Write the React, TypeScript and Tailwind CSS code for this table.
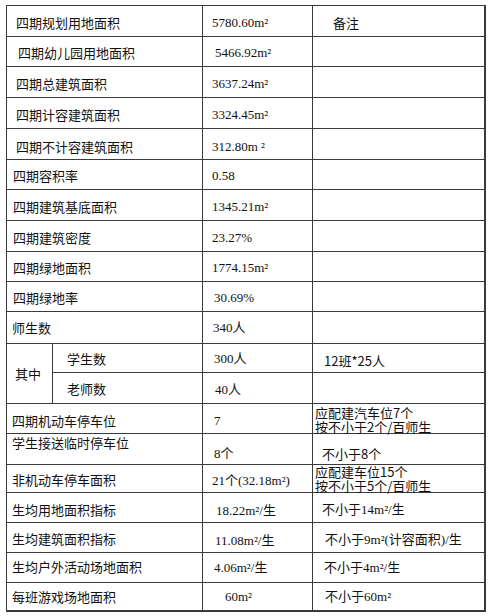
import React from "react";

const sans = "font-['Noto_Sans_CJK_SC',sans-serif]";
const serif = "font-['Liberation_Serif','Noto_Sans_CJK_SC',serif]";
const base = "flex items-center border-r border-b border-[#3a3a3a] whitespace-nowrap text-[13px] leading-[14px] text-[#111111]";

function C({ className = "", children }: { className?: string; children?: React.ReactNode }) {
  return <div className={`${base} ${className}`}>{children}</div>;
}

function M2() {
  return <span>m²</span>;
}

export default function App() {
  return (
    <div className="w-[491px] h-[616px] bg-white overflow-hidden">
      <div className="ml-[6px] mt-[5px] w-[480px] grid grid-cols-[46px_150px_110px_173px] grid-rows-[31px_30px_31px_31px_31px_30px_31px_31px_30px_30px_32px_29px_31px_30px_31px_28px_30px_30px_30px_29px] border-l border-t border-[#3a3a3a]">
        {/* row 1 */}
        <C className={`col-span-2 pl-[9px] pt-[3px] ${sans}`}>四期规划用地面积</C>
        <C className={`pl-[9px] pt-[3px] ${serif}`}>5780.60<M2 /></C>
        <C className={`pl-[20px] pt-[3px] border-r-2 ${sans}`}>备注</C>
        {/* row 2 */}
        <C className={`col-span-2 pl-[11px] pt-[2px] ${sans}`}>四期幼儿园用地面积</C>
        <C className={`pl-[12px] pt-[2px] ${serif}`}>5466.92<M2 /></C>
        <C className="border-r-2" />
        {/* row 3 */}
        <C className={`col-span-2 pl-[9px] pt-[3px] ${sans}`}>四期总建筑面积</C>
        <C className={`pl-[9px] pt-[3px] ${serif}`}>3637.24<M2 /></C>
        <C className="border-r-2" />
        {/* row 4 */}
        <C className={`col-span-2 pl-[9px] pt-[3px] ${sans}`}>四期计容建筑面积</C>
        <C className={`pl-[9px] pt-[3px] ${serif}`}>3324.45<M2 /></C>
        <C className="border-r-2" />
        {/* row 5 */}
        <C className={`col-span-2 pl-[9px] pt-[6px] ${sans}`}>四期不计容建筑面积</C>
        <C className={`pl-[9px] pt-[6px] ${serif}`}>312.80m ²</C>
        <C className="border-r-2" />
        {/* row 6 */}
        <C className={`col-span-2 pl-[6px] pt-[2px] ${sans}`}>四期容积率</C>
        <C className={`pl-[9px] pt-[2px] ${serif}`}>0.58</C>
        <C className="border-r-2" />
        {/* row 7 */}
        <C className={`col-span-2 pl-[6px] pt-[4px] ${sans}`}>四期建筑基底面积</C>
        <C className={`pl-[9px] pt-[4px] ${serif}`}>1345.21<M2 /></C>
        <C className="border-r-2" />
        {/* row 8 */}
        <C className={`col-span-2 pl-[6px] pt-[3px] ${sans}`}>四期建筑密度</C>
        <C className={`pl-[9px] pt-[3px] ${serif}`}>23.27%</C>
        <C className="border-r-2" />
        {/* row 9 */}
        <C className={`col-span-2 pl-[6px] pt-[2px] ${sans}`}>四期绿地面积</C>
        <C className={`pl-[9px] pt-[2px] ${serif}`}>1774.15<M2 /></C>
        <C className="border-r-2" />
        {/* row 10 */}
        <C className={`col-span-2 pl-[6px] pt-[2px] ${sans}`}>四期绿地率</C>
        <C className={`pl-[11px] pt-[2px] ${serif}`}>30.69%</C>
        <C className="border-r-2" />
        {/* row 11 */}
        <C className={`col-span-2 pl-[5px] pt-[1px] ${sans}`}>师生数</C>
        <C className={`pl-[10px] pt-[1px] ${serif}`}>340人</C>
        <C className="border-r-2" />
        {/* row 12-13 */}
        <C className={`row-span-2 pl-[8px] ${sans}`}>其中</C>
        <C className={`pl-[14px] pt-[1px] ${sans}`}>学生数</C>
        <C className={`pl-[11px] pt-[1px] ${serif}`}>300人</C>
        <C className={`pl-[11px] pt-[5px] border-r-2 ${sans}`}>12班*25人</C>
        <C className={`pl-[14px] pt-[1px] ${sans}`}>老师数</C>
        <C className={`pl-[12px] pt-[3px] ${serif}`}>40人</C>
        <C className="border-r-2" />
        {/* row 14 */}
        <C className={`col-span-2 pl-[5px] pt-[4px] ${sans}`}>四期机动车停车位</C>
        <C className={`pl-[11px] pt-[4px] ${serif}`}>7</C>
        <C className={`pl-[2px] pt-[2px] border-r-2 ${sans}`}>
          <div className="leading-[14px]">
            <div>应配建汽车位7个</div>
            <div>按不小于2个/百师生</div>
          </div>
        </C>
        {/* row 15 */}
        <C className={`col-span-2 pl-[5px] pb-[12px] ${sans}`}>学生接送临时停车位</C>
        <C className={`pl-[11px] pt-[10px] ${serif}`}>8个</C>
        <C className={`pl-[9px] pt-[10px] border-r-2 ${sans}`}>不小于8个</C>
        {/* row 16 */}
        <C className={`col-span-2 pl-[5px] pt-[2px] ${sans}`}>非机动车停车面积</C>
        <C className={`pl-[9px] pt-[4px] ${serif}`}>21个(32.18<M2 />)</C>
        <C className={`pl-[2px] border-r-2 ${sans}`}>
          <div className="leading-[14px]">
            <div>应配建车位15个</div>
            <div>按不小于5个/百师生</div>
          </div>
        </C>
        {/* row 17 */}
        <C className={`col-span-2 pl-[5px] pt-[4px] ${sans}`}>生均用地面积指标</C>
        <C className={`pl-[13px] pt-[7px] ${serif}`}>18.22<M2 />/生</C>
        <C className={`pl-[9px] pt-[4px] border-r-2 ${serif}`}>不小于14<M2 />/生</C>
        {/* row 18 */}
        <C className={`col-span-2 pl-[5px] pt-[3px] ${sans}`}>生均建筑面积指标</C>
        <C className={`pl-[12px] pt-[7px] ${serif}`}>11.08<M2 />/生</C>
        <C className={`pl-[12px] pt-[5px] border-r-2 ${serif}`}>不小于9<M2 />(计容面积)/生</C>
        {/* row 19 */}
        <C className={`col-span-2 pl-[5px] pb-[2px] ${sans}`}>生均户外活动场地面积</C>
        <C className={`pl-[11px] ${serif}`}>4.06<M2 />/生</C>
        <C className={`pl-[11px] border-r-2 ${serif}`}>不小于4<M2 />/生</C>
        {/* row 20 */}
        <C className={`col-span-2 pl-[5px] border-b-2 ${sans}`}>每班游戏场地面积</C>
        <C className={`pl-[22px] border-b-2 ${serif}`}>60<M2 /></C>
        <C className={`pl-[12px] border-r-2 border-b-2 ${serif}`}>不小于60<M2 /></C>
      </div>
    </div>
  );
}
